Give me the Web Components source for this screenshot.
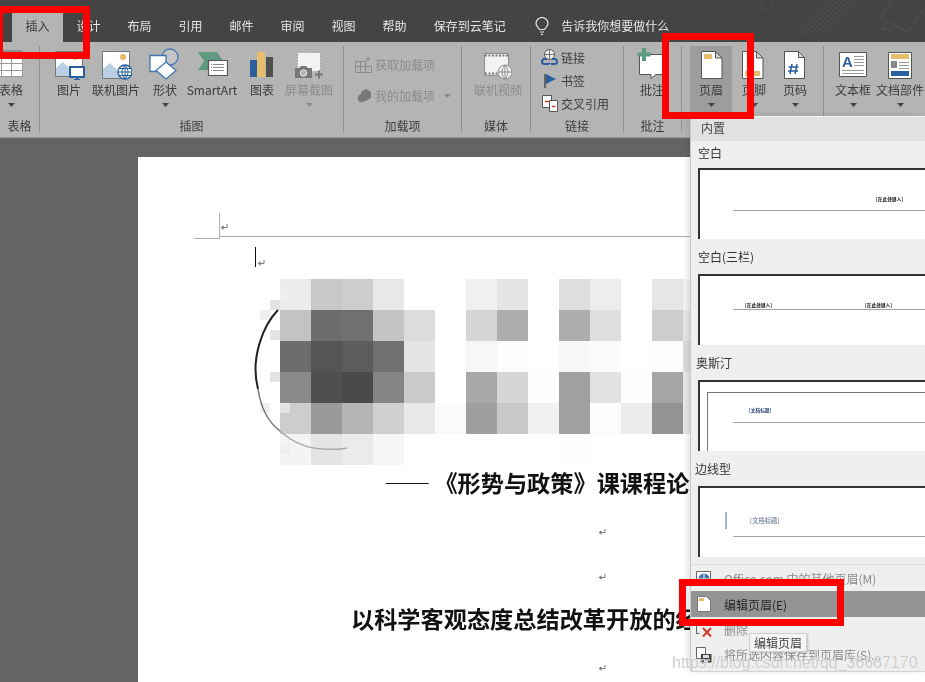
<!DOCTYPE html>
<html lang="zh">
<head>
<meta charset="utf-8">
<title>Word</title>
<style>
  html, body { margin: 0; height: 100%; overflow: hidden; background: #646464; }
  body { position: relative; width: 925px; height: 682px; font: 12px "Noto Sans CJK SC", "Noto Sans", sans-serif; color: #3c3c3c; }
  svg { display: block; }
</style>
</head>
<body>

<word-app>
  <word-tabbar>
    <tab-item active>插入</tab-item>
    <tab-item>设计</tab-item>
    <tab-item>布局</tab-item>
    <tab-item>引用</tab-item>
    <tab-item>邮件</tab-item>
    <tab-item>审阅</tab-item>
    <tab-item>视图</tab-item>
    <tab-item>帮助</tab-item>
    <tab-item>保存到云笔记</tab-item>
    <tell-me>告诉我你想要做什么</tell-me>
  </word-tabbar>

  <word-ribbon>
    <rb-group style="width:40px;padding-left:0" label="表格">
      <rb-btn style="width:24px;margin-left:-1px" caret>
        <svg slot="icon" width="32" height="32" viewBox="0 0 32 32"><path fill="#fff" d="M-3 2h31v27H-3z"/><path fill="#8f8f8f" d="M-3 2h31v7H-3z"/><path fill="none" stroke="#9a9a9a" d="M-3 15.5h31M-3 22.5h31M6.5 9v20M16.5 9v20M27.5 2v27M-3 28.5h31"/></svg>
        表格
      </rb-btn>
    </rb-group>

    <rb-group style="width:304px;padding-left:6px" label="插图">
      <rb-btn style="width:46px">
        <svg slot="icon" width="32" height="32" viewBox="0 0 32 32"><path fill="#fff" stroke="#777" d="M2.5 3.5h27v25h-27z"/><circle cx="22" cy="9" r="3" fill="#e8b866"/><path fill="#b9cfe4" d="M3 28V20l7-6 9 9 2 5z"/><path fill="#fff" stroke="#2a5f9e" stroke-width="2" d="M17 19h14v10H17z"/><path stroke="#2a5f9e" stroke-width="2" d="M24 29v2M21 32h6"/></svg>
        图片
      </rb-btn>
      <rb-btn style="width:48px">
        <svg slot="icon" width="32" height="32" viewBox="0 0 32 32"><path fill="#fff" stroke="#777" d="M2.5 3.5h27v27h-27z"/><circle cx="23" cy="9" r="3" fill="#e8b866"/><path fill="#b9cfe4" d="M3 30v-9l7-6 9 9 2 6z"/><circle cx="25" cy="24" r="7" fill="#fff" stroke="#2a5f9e" stroke-width="1.4"/><path fill="none" stroke="#2a5f9e" d="M18 24h14M25 17v14M19.500 20.500h11M19.500 27.500h11M25 17c-4 4-4 10 0 14M25 17c4 4 4 10 0 14"/></svg>
        联机图片
      </rb-btn>
      <rb-btn style="width:50px" caret>
        <svg slot="icon" width="32" height="32" viewBox="0 0 32 32"><circle cx="21" cy="9" r="8" fill="#c4c4c4" stroke="#3f77ad" stroke-width="1.300"/><path fill="#fff" stroke="#3f77ad" stroke-width="1.300" d="M1 7.500h16v16H1z"/><path fill="#fff" stroke="#3f77ad" stroke-width="1.300" d="M17 14l10 8.500-10 8.500-10-8.500z"/></svg>
        形状
      </rb-btn>
      <rb-btn style="width:44px">
        <svg slot="icon" width="32" height="32" viewBox="0 0 32 32"><path fill="#5d9a80" d="M2 4h19l6 9-6 9H2l6-9z"/><path fill="#fff" stroke="#555" stroke-width="1.200" d="M12.500 12.500h19v15h-19z"/><path stroke="#888" d="M17 16.500h11M17 19.500h11M17 22.500h11"/><path stroke="#888" d="M15 16.500h1M15 19.500h1M15 22.500h1"/></svg>
        SmartArt
      </rb-btn>
      <rb-btn style="width:56px">
        <svg slot="icon" width="32" height="32" viewBox="0 0 32 32"><path fill="#2a5f9e" d="M4 12h7v17H4z"/><path fill="#e6bd6a" d="M11 4h8v25h-8z"/><path fill="#505050" d="M20 9h7v20h-7z"/></svg>
        图表
      </rb-btn>
      <rb-btn style="width:38px" caret disabled>
        <svg slot="icon" width="32" height="32" viewBox="0 0 32 32"><path fill="#f2f2f2" stroke="#9a9a9a" stroke-dasharray="1.500 1.500" d="M4.500 4.500h23v19h-23z"/><path fill="#777" d="M2 20h4l2-2h5l2 2h4v10H2z"/><circle cx="10.500" cy="25" r="3.200" fill="#b4b4b4" stroke="#eee"/><path stroke="#777" stroke-width="2" d="M22 26.500h8M26 22.500v8"/></svg>
        屏幕截图
      </rb-btn>
    </rb-group>

    <rb-group style="width:118px;padding-left:11px;flex-direction:column;padding-top:3px" label="加载项">
      <rb-row style="height:31px" disabled>
        <svg slot="icon" width="17" height="17" viewBox="0 0 17 17"><path fill="none" stroke="#8a8a8a" d="M.5 5.500h10v11H.5zM.5 10.500h10M5.500 5.500v11M10.500 10.500h6v6h-6zM13 .5v5M10.500 3h5"/></svg>
        获取加载项
      </rb-row>
      <rb-row style="height:31px" disabled caret>
        <svg slot="icon" width="17" height="17" viewBox="0 0 17 17"><path fill="#777" d="M6 5l5-3 5 3v6l-5 3-1-.6A4 4 0 1 1 6 7.300z"/></svg>
        我的加载项
      </rb-row>
    </rb-group>

    <rb-group style="width:69px;padding-left:12px" label="媒体">
      <rb-btn style="width:48px" disabled>
        <svg slot="icon" width="32" height="32" viewBox="0 0 32 32"><path fill="#f3f3f3" stroke="#8c8c8c" d="M2.500 5.500h24v22h-24z"/><path stroke="#777" stroke-width="2" stroke-dasharray="2 1.500" d="M3 7.500h23M3 25.500h23"/><circle cx="23" cy="24" r="7" fill="#f3f3f3" stroke="#8c8c8c"/><path fill="none" stroke="#8c8c8c" d="M16 24h14M23 17v14M23 17c-4 4-4 10 0 14M23 17c4 4 4 10 0 14"/></svg>
        联机视频
      </rb-btn>
    </rb-group>

    <rb-group style="width:93px;padding-left:10px;flex-direction:column" label="链接">
      <rb-row style="height:23px">
        <svg slot="icon" width="17" height="17" viewBox="0 0 17 17"><circle cx="8.500" cy="5.500" r="5" fill="#eee" stroke="#555"/><path fill="none" stroke="#555" stroke-width=".8" d="M3.500 5.500h10M8.500 .5v10"/><path fill="none" stroke="#2a5f9e" stroke-width="2" d="M6 10H3.500a2.500 2.500 0 0 0 0 5H7a2.500 2.500 0 0 0 2-1M11 10h2.500a2.500 2.500 0 0 1 0 5H10"/></svg>
        链接
      </rb-row>
      <rb-row style="height:23px">
        <svg slot="icon" width="17" height="17" viewBox="0 0 17 17"><path stroke="#444" stroke-width="1.400" d="M4 2v14"/><path fill="#2a5f9e" d="M5 2l10 5-10 5z"/></svg>
        书签
      </rb-row>
      <rb-row style="height:23px">
        <svg slot="icon" width="17" height="17" viewBox="0 0 17 17"><path fill="#fff" stroke="#555" d="M1.500 .5h9v12h-9z"/><path fill="#fff" stroke="#555" d="M8.500 5.500h8v11h-8z"/><path stroke="#d03a2a" stroke-width="1.600" d="M4 6.500h4M11 11.500h3.500"/></svg>
        交叉引用
      </rb-row>
    </rb-group>

    <rb-group style="width:58px;padding-left:4px" label="批注">
      <rb-btn style="width:48px">
        <svg slot="icon" width="32" height="32" viewBox="0 0 32 32"><path fill="#fff" stroke="#555" d="M3.500 6.500h29v20H20l-5 4v-4H3.500z"/><path stroke="#5d9a80" stroke-width="4" d="M8 0v13M1.500 6.500h13"/></svg>
        批注
      </rb-btn>
    </rb-group>

    <rb-group style="width:142px;padding-left:8px">
      <rb-btn style="width:42px" caret active>
        <svg slot="icon" width="32" height="32" viewBox="0 0 32 32"><path fill="#fff" stroke="#555" d="M6.500 3.500h14l6.500 6.500v20.500h-20.500z"/><path fill="#d8d8d8" stroke="#555" d="M20.500 3.500V10H27z"/><path fill="#e6bd6a" d="M9 6h8v5H9z"/></svg>
        页眉
      </rb-btn>
      <rb-btn style="width:44px" caret>
        <svg slot="icon" width="32" height="32" viewBox="0 0 32 32"><path fill="#fff" stroke="#555" d="M4.500 3.500h14l6.500 6.500v20.500h-20.500z"/><path fill="#d8d8d8" stroke="#555" d="M18.500 3.500V10H25z"/><path fill="#e6bd6a" d="M7 23h15v5H7z"/></svg>
        页脚
      </rb-btn>
      <rb-btn style="width:38px" caret>
        <svg slot="icon" width="32" height="32" viewBox="0 0 32 32"><path fill="#fff" stroke="#555" d="M5.500 3.500h14l6 6v21h-20z"/><path fill="#d8d8d8" stroke="#555" d="M19.500 3.500V9.500h6z"/><path stroke="#2a5f9e" stroke-width="1.500" fill="none" d="M13 16l-2 10M18 16l-2 10M9.500 19h10M9 23h10"/></svg>
        页码
      </rb-btn>
    </rb-group>

    <rb-group style="width:110px;padding-left:8px">
      <rb-btn style="width:42px" caret>
        <svg slot="icon" width="32" height="32" viewBox="0 0 32 32"><path fill="#fff" stroke="#555" d="M2.500 4.500h27v24h-27z"/><text x="5" y="19" font-family="Liberation Sans" font-weight="700" font-size="15" fill="#2a5f9e">A</text><path stroke="#999" d="M17 8.500h10M17 11.500h10M17 14.500h10M17 17.500h10M5 22.500h22M5 25.500h22"/></svg>
        文本框
      </rb-btn>
      <rb-btn style="width:52px" caret>
        <svg slot="icon" width="32" height="32" viewBox="0 0 32 32"><path fill="#fff" stroke="#555" d="M4.500 4.500h23v26h-23z"/><path fill="#e6bd6a" d="M7 6h18v5H7z"/><path fill="#888" d="M7 13h6v7H7z"/><path stroke="#999" d="M15 14.500h10M15 17.500h10M15 20.500h10"/><path fill="#2a5f9e" d="M7 23h18v5H7z"/></svg>
        文档部件
      </rb-btn>
    </rb-group>
  </word-ribbon>

  <word-workspace>
    <doc-page>
      <doc-header><para-mark></para-mark></doc-header>
      <doc-line style="margin-top:10px;height:20px;padding-left:117px"><doc-cursor></doc-cursor><para-mark style="margin-top:7px"></para-mark></doc-line>
      <mosaic-image style="margin:12px 0 0 142px"></mosaic-image>
      <doc-title style="padding-left:246px"><span style="letter-spacing:2px;padding-right:2px">——</span>《形势与政策》课课程论</doc-title>
      <doc-line style="margin-top:22px;padding-left:459px"><para-mark></para-mark></doc-line>
      <doc-line style="margin-top:33px;padding-left:459px"><para-mark></para-mark></doc-line>
      <doc-title style="margin-top:21px;padding-left:213px">以科学客观态度总结改革开放的经</doc-title>
      <doc-line style="margin-top:22px;padding-left:459px"><para-mark></para-mark></doc-line>
    </doc-page>
  </word-workspace>

  <header-menu>
    <menu-head>内置</menu-head>
    <menu-section style="--label-h:27px;--label-pad:0 0 4px 7px" label="空白">
      <mini-doc style="padding-top:25px">
        <mini-text style="margin-left:176px">[在此处键入]</mini-text>
        <mini-rule style="margin-top:7px"></mini-rule>
      </mini-doc>
    </menu-section>
    <menu-section style="--label-pad:0 0 0 7px" label="空白(三栏)">
      <mini-doc style="padding-top:25px">
        <div style="display:flex;gap:93px;margin-left:45px"><mini-text>[在此处键入]</mini-text><mini-text>[在此处键入]</mini-text></div>
        <mini-rule></mini-rule>
      </mini-doc>
    </menu-section>
    <menu-section style="--label-pad:0 0 0 5px" label="奥斯汀">
      <mini-doc style="padding:10px 0 0 7px">
        <div style="border:solid #777;border-width:1px 0 0 1px;height:70px;padding-top:13px;box-sizing:border-box">
          <mini-text style="margin-left:41px;color:#2a3f6e">[文档标题]</mini-text>
          <mini-rule style="margin:8px 0 0 25px"></mini-rule>
        </div>
      </mini-doc>
    </menu-section>
    <menu-section style="--label-pad:0 0 0 4px" label="边线型">
      <mini-doc style="padding-top:24px">
        <div style="display:flex;margin-left:25px;height:17px;align-items:center"><div style="width:2px;height:17px;background:#9db4d8;margin-right:23px"></div><mini-text style="font-size:6.300px;font-weight:400;font-style:normal;color:#55648a">[文档标题]</mini-text></div>
        <mini-rule style="margin-top:7px"></mini-rule>
      </mini-doc>
    </menu-section>
    <menu-sep></menu-sep>
    <menu-item style="height:25px" disabled>
      <svg slot="icon" width="16" height="16" viewBox="0 0 16 16"><path fill="#fff" stroke="#666" d="M.5 .5h14v13H.5z"/><circle cx="8" cy="8" r="5.500" fill="#3f77ad"/><path fill="none" stroke="#fff" d="M2.500 8h11M8 2.500v11"/></svg>
      Office.com 中的其他页眉(M)
    </menu-item>
    <menu-item style="height:26px" active>
      <svg slot="icon" width="16" height="16" viewBox="0 0 16 16"><path fill="#fff" stroke="#777" d="M1.500 .5h9l4 4v11h-13z"/><path fill="#e6bd6a" d="M3 2h5v3H3z"/></svg>
      编辑页眉(E)
    </menu-item>
    <menu-item style="height:25px" disabled>
      <svg slot="icon" width="16" height="16" viewBox="0 0 16 16"><path fill="none" stroke="#666" d="M.5 .5h8M.5 .5v11h3"/><path stroke="#d03a2a" stroke-width="2" d="M7 6l8 8.500M15 6l-8 8.500"/></svg>
      删除
    </menu-item>
    <menu-item style="height:25px" disabled>
      <svg slot="icon" width="16" height="16" viewBox="0 0 16 16"><path fill="#fff" stroke="#666" d="M.5 .5h9v11h-9z"/><path fill="#444" d="M5 7h10.500v8.500H5z"/><path fill="#ddd" d="M7 8h6v3H7zM8 12.500h4v3H8z"/></svg>
      将所选内容保存到页眉库(S)...
    </menu-item>
  </header-menu>

  <tool-tip>编辑页眉</tool-tip>
</word-app>

<red-box style="left:-4px;top:6px;width:94px;height:53px"></red-box>
<red-box style="left:662px;top:33px;width:92px;height:86px"></red-box>
<red-box style="left:679px;top:579px;width:165px;height:47px"></red-box>
<csdn-mark>https://blog.csdn.net/qq_36667170</csdn-mark>

<script>
  // every element here is just markup + style, so they share one small base class
  function register(name, html) {
    const template = document.createElement("template");
    template.innerHTML = html;

    class Piece extends HTMLElement {
      connectedCallback() {
        if (this.shadowRoot) return;
        this.attachShadow({ mode: "open" });
        this.shadowRoot.appendChild(template.content.cloneNode(true));

        const $label = this.shadowRoot.querySelector("[data-label]");
        if ($label) $label.textContent = this.getAttribute("label") || "";
      }
    }

    window.customElements.define(name, Piece);
  }

  const caret = `<svg class="caret" width="7" height="4" viewBox="0 0 7 4"><path fill="currentColor" d="M0 0h7L3.500 4z"/></svg>`;

  register("word-app", `
    <style>
      :host { display: flex; flex-direction: column; position: absolute; inset: 0; overflow: hidden; filter: blur(.45px); }
    </style>
    <slot></slot>
  `);

  register("word-tabbar", `
    <style>
      :host { display: flex; position: relative; height: 42px; padding-left: 12px; background: #444; color: #e6e6e6; box-sizing: border-box; flex: none; overflow: hidden; }
      svg { position: absolute; left: 740px; top: 0; }
    </style>
    <svg width="185" height="42" viewBox="0 0 185 42" fill="none" stroke="#525252">
      <path d="M60 34L94 0M65 34L99 0M70 34L104 0M75 34L109 0M80 34L114 0"/>
      <path d="M22 0c-4 10 8 14 11 4"/>
      <path d="M140 18l12-18M140 18l28 14 17-26M146 22l-4 8 6-2 2 5 4-8"/>
    </svg>
    <slot></slot>
  `);

  register("tab-item", `
    <style>
      :host { display: block; position: relative; padding: 0 13.500px; height: 29px; margin-top: 13px; line-height: 25px; white-space: nowrap; }
      :host([active]) { background: #b4b4b4; color: #3c3c3c; }
    </style>
    <slot></slot>
  `);

  register("tell-me", `
    <style>
      :host { display: flex; align-items: center; height: 25px; margin: 13px 0 0 16px; white-space: nowrap; }
      svg { margin-right: 12px; }
    </style>
    <svg width="14" height="18" viewBox="0 0 14 18" fill="none" stroke="#e6e6e6" stroke-width="1.200"><path d="M4.500 12.500C3 10 1 9 1 6.500a6 6 0 0 1 12 0c0 2.500-2 3.500-3.500 6z"/><path d="M5 15h4M6 17.300h2"/></svg>
    <slot></slot>
  `);

  register("word-ribbon", `
    <style>
      :host { display: flex; height: 91px; padding-top: 4px; background: #b4b4b4; border-bottom: 1px solid #9c9c9c; flex: none; }
    </style>
    <slot></slot>
  `);

  register("rb-group", `
    <style>
      :host { display: flex; flex: none; position: relative; height: 86px; box-sizing: border-box; border-right: 1px solid #919191; align-items: flex-start; }
      span { position: absolute; left: 0; right: 0; top: 72px; text-align: center; line-height: 16px; }
    </style>
    <slot></slot>
    <span data-label></span>
  `);

  register("rb-btn", `
    <style>
      :host { display: flex; flex: none; flex-direction: column; align-items: center; height: 66px; white-space: nowrap; }
      :host([active]) { background: #9d9d9d; }
      :host([disabled]) { color: #8c8c8c; }
      .icon { height: 34px; padding-top: 2px; box-sizing: border-box; }
      .text { line-height: 20px; height: 20px; }
      .caret { display: none; margin-top: 3px; color: #444; }
      :host([caret]) .caret { display: block; }
      :host([disabled]) .caret { color: #8c8c8c; }
    </style>
    <div class="icon"><slot name="icon"></slot></div>
    <div class="text"><slot></slot></div>
    ${caret}
  `);

  register("rb-row", `
    <style>
      :host { display: flex; align-items: center; white-space: nowrap; }
      :host([disabled]) { color: #8c8c8c; }
      .icon { width: 20px; flex: none; }
      .caret { display: none; margin-left: 9px; color: #8c8c8c; }
      :host([caret]) .caret { display: block; }
    </style>
    <div class="icon"><slot name="icon"></slot></div>
    <slot></slot>
    ${caret}
  `);

  register("word-workspace", `
    <style>
      :host { display: block; flex: 1; padding: 19px 0 0 138px; background: #646464; overflow: hidden; min-height: 0; }
    </style>
    <slot></slot>
  `);

  register("doc-page", `
    <style>
      :host { display: block; background: #fff; height: 700px; width: 900px; }
    </style>
    <slot></slot>
  `);

  register("doc-header", `
    <style>
      :host { display: block; position: relative; margin-left: 81px; padding-top: 61px; height: 18px; border-bottom: 1px solid #aaa; }
      i { position: absolute; background: #b0b0b0; }
      .v { left: 0; top: 56px; width: 1px; height: 26px; }
      .h { left: -25px; top: 81px; width: 25px; height: 1px; }
    </style>
    <i class="v"></i><i class="h"></i>
    <slot></slot>
  `);

  register("doc-line", `
    <style>
      :host { display: flex; height: 12px; }
    </style>
    <slot></slot>
  `);

  register("doc-cursor", `
    <style>
      :host { display: block; width: 1px; height: 20px; background: #111; }
    </style>
  `);

  register("para-mark", `
    <style>
      :host { display: block; width: 8px; height: 9px; margin-left: 1px; }
    </style>
    <svg width="8" height="9" viewBox="0 0 8 9" fill="none" stroke="#777"><path d="M7 1v3.500H1.500"/><path d="M3.500 2.500L1 4.500l2.500 2" fill="#777" stroke-width=".6"/></svg>
  `);

  register("doc-title", `
    <style>
      :host { display: block; height: 36px; line-height: 34px; font-size: 23.200px; font-weight: 700; color: #111; white-space: nowrap; }
    </style>
    <slot></slot>
  `);

  register("mosaic-image", `
    <style>
      :host { display: block; position: relative; width: 434px; height: 186px; }
      .grid { display: grid; grid-template-columns: repeat(14, 31px); grid-auto-rows: 31px; }
      svg { position: absolute; left: -33px; top: 0; overflow: visible; }
    </style>
    <div class="grid"></div>
    <svg width="70" height="186" viewBox="0 0 70 186" fill="none">
      <path fill="#e4e4e4" d="M23 21h10v10H23zM23 51h10v10H23zM23 93h10v10H23zM33 124h10v10H33z"/>
      <path fill="#efefef" d="M33 10h10v11H33zM13 31h10v10H13zM13 124h10v10H13zM33 165h10v10H33z"/>
      <path stroke="#222" stroke-width="2" d="M31 31C16 46 3 80 11 110"/>
      <path stroke="#777" stroke-width="1.500" d="M11 110c3 20 10 33 22 42"/>
      <path stroke="#aaa" stroke-width="1.500" d="M33 152c10 9 24 17 42 18 12 1 18 0 25-1"/>
    </svg>
  `);

  const mosaicRows = [
    ["ececec", "c8c8c8", "cdcdcd", "e8e8e8", "fff", "fff", "f1f1f1", "e4e4e2", "fff", "dedede", "eceded", "fff", "e6e6e6", "f4f4f4"],
    ["c3c3c3", "6d6d6d", "707070", "c4c4c4", "dcdcdc", "fff", "d5d7d7", "adafaf", "fff", "adafae", "dfe0e0", "fff", "cccece", "e8e8e8"],
    ["6d6d6d", "555", "5c5c5c", "707070", "e4e4e4", "fff", "f6f7f7", "fdfdfd", "fff", "f8f8f8", "fbfbfb", "fff", "fdfdfd", "ddd"],
    ["8a8a8a", "4f4f4f", "4a4a4a", "858585", "cacaca", "fff", "a8a8a8", "d5d7d7", "fdfdfd", "9fa1a0", "e1e3e2", "fdfdfd", "a5a5a5", "e8e8e8"],
    ["cdcdcd", "9a9a9a", "b5b5b5", "cfcfcf", "e8e8e8", "fafafa", "9ea0a0", "c8c8c8", "f1f1f1", "a0a2a1", "fcfcfc", "ececec", "929493", "e8e8e8"],
    ["f4f4f4", "e4e4e4", "ebebeb", "f6f6f6", "fff", "fff", "fff", "fff", "fff", "fdfdfd", "fff", "fff", "fff", "fff"]
  ];

  register("header-menu", `
    <style>
      :host { display: block; position: absolute; left: 691px; top: 116px; width: 234px; height: 555px; background: #efefef; border-top: 1px solid #f6f6f6; box-sizing: border-box; box-shadow: -1px 0 0 #c8c8c8, -3px 0 6px rgba(0,0,0,.12), 0 1px 0 #ddd; }
    </style>
    <slot></slot>
  `);

  register("menu-head", `
    <style>
      :host { display: block; height: 24px; line-height: 22px; padding-left: 10px; background: #e1e1e1; color: #444; }
    </style>
    <slot></slot>
  `);

  register("menu-section", `
    <style>
      :host { display: block; }
      .label { height: var(--label-h, 35px); line-height: 18px; padding: var(--label-pad, 0 0 0 7px); box-sizing: border-box; display: flex; align-items: center; color: #333; white-space: nowrap; }
    </style>
    <div class="label" data-label></div>
    <slot></slot>
  `);

  register("mini-doc", `
    <style>
      :host { display: block; height: 71px; margin-left: 7px; background: #fff; border: solid #333; border-width: 2px 0 0 2px; box-sizing: border-box; overflow: hidden; }
    </style>
    <slot></slot>
  `);

  register("mini-text", `
    <style>
      :host { display: block; width: max-content; height: 8px; line-height: 8px; font-size: 4.700px; font-weight: 700; color: #222; white-space: nowrap; }
    </style>
    <slot></slot>
  `);

  register("mini-rule", `
    <style>
      :host { display: block; height: 1px; margin-left: 33px; background: #a5a5a5; }
    </style>
  `);

  register("menu-sep", `
    <style>
      :host { display: block; height: 1px; margin: 7px 0 1px; background: #dcdcdc; }
    </style>
  `);

  register("menu-item", `
    <style>
      :host { display: flex; align-items: center; padding-left: 5px; white-space: nowrap; color: #666; }
      :host([active]) { background: #949494; color: #262626; }
      :host([disabled]) { color: #8a8a8a; }
      .icon { width: 28px; flex: none; }
    </style>
    <div class="icon"><slot name="icon"></slot></div>
    <slot></slot>
  `);

  register("tool-tip", `
    <style>
      :host { display: block; position: absolute; left: 749px; top: 633px; width: 58px; height: 19px; box-sizing: border-box; line-height: 17px; text-align: center; background: #f5f5f5; border: 1px solid #d0d0d0; color: #444; box-shadow: 1px 1px 2px rgba(0,0,0,.2); }
    </style>
    <slot></slot>
  `);

  register("red-box", `
    <style>
      :host { display: block; position: absolute; box-sizing: border-box; border: 7.500px solid #f00; }
    </style>
  `);

  register("csdn-mark", `
    <style>
      :host { display: block; position: absolute; left: 672px; top: 652px; font: 16px/22px "Liberation Sans", sans-serif; color: rgba(190,190,190,.75); text-shadow: 0 0 1px rgba(255,255,255,.8); white-space: nowrap; }
    </style>
    <slot></slot>
  `);

  // fill the mosaic cells once the elements exist
  document.querySelectorAll("mosaic-image").forEach($image => {
    const $grid = $image.shadowRoot.querySelector(".grid");
    mosaicRows.flat().forEach(color => {
      const $cell = document.createElement("div");
      $cell.style.background = "#" + color;
      $grid.appendChild($cell);
    });
  });
</script>
</body>
</html>
